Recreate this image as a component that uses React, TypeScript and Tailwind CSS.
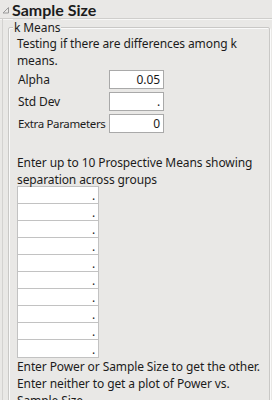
import React from "react";

const font = { fontFamily: '"Noto Sans", "Open Sans", sans-serif' };
const head = { fontFamily: 'Lato, "Noto Sans", sans-serif' };

function Field({ value }: { value: string }) {
  return (
    <div className="shrink-0 w-[55px] h-[19px] bg-white border border-[#a9a9a9] flex items-center justify-end pr-[3px] text-[12px] leading-none text-[#1a1a1a]">
      {value}
    </div>
  );
}

export default function App() {
  const rows = Array.from({ length: 10 });
  return (
    <div className="w-[272px] h-[400px] overflow-hidden bg-[#e9e8e6] text-[#1c1c1c] text-[12px] tracking-[-0.1px]" style={font}>
      <div className="flex items-center h-[19px] border-b border-[#cfcecc] shadow-[0_1px_0_#f7f7f6]">
        <svg width="10" height="10" viewBox="0 0 10 10" className="ml-[1px] mt-[1px]">
          <path d="M7.5 2.5 L7.5 8 L2 8 Z" fill="none" stroke="#9a9a9a" strokeWidth="1" />
        </svg>
        <span className="ml-[1px] text-[16px] font-bold leading-[19px] tracking-normal" style={head}>Sample Size</span>
      </div>
      <div className="ml-[2px] border-l border-[#d3d2d0] h-[381px] pt-[8px] pr-[2px]">
        <div className="relative ml-[5px] border border-[#c9c8c6] shadow-[inset_1px_1px_0_#fafafa,1px_1px_0_#fafafa] rounded-[2px] pl-[8px] pr-[4px] pt-[7px] h-[420px]">
          <span className="absolute left-[4px] top-[-9px] px-[1px] bg-[#e9e8e6] leading-[17px]">k Means</span>
          <div className="leading-[17px]">
            Testing if there are differences among k means.
          </div>
          <div className="flex flex-col gap-[3px] w-[147px] mt-[1px]">
            <div className="flex items-center justify-between pl-[1px]">
              <span className="whitespace-nowrap">Alpha</span>
              <Field value="0.05" />
            </div>
            <div className="flex items-center justify-between pl-[1px]">
              <span className="whitespace-nowrap">Std Dev</span>
              <Field value="." />
            </div>
            <div className="flex items-center justify-between pl-[1px]">
              <span className="whitespace-nowrap text-[11.5px] tracking-[-0.35px]">Extra Parameters</span>
              <Field value="0" />
            </div>
          </div>
          <div className="leading-[17px] mt-[21px]">
            Enter up to 10 Prospective Means showing separation across groups
          </div>
          <div className="-mt-[2px] flex flex-col w-[82px] border border-[#c2c2c2]">
            {rows.map((_, i) => (
              <div
                key={i}
                className="h-[17px] bg-white border-b border-[#c2c2c2] last:border-b-0 flex items-end justify-end pr-[3px] text-[12px] leading-[14px]"
              >
                .
              </div>
            ))}
          </div>
          <div className="leading-[17px]">
            Enter Power or Sample Size to get the other. Enter neither to get a plot of Power vs. Sample Size.
          </div>
        </div>
      </div>
    </div>
  );
}
